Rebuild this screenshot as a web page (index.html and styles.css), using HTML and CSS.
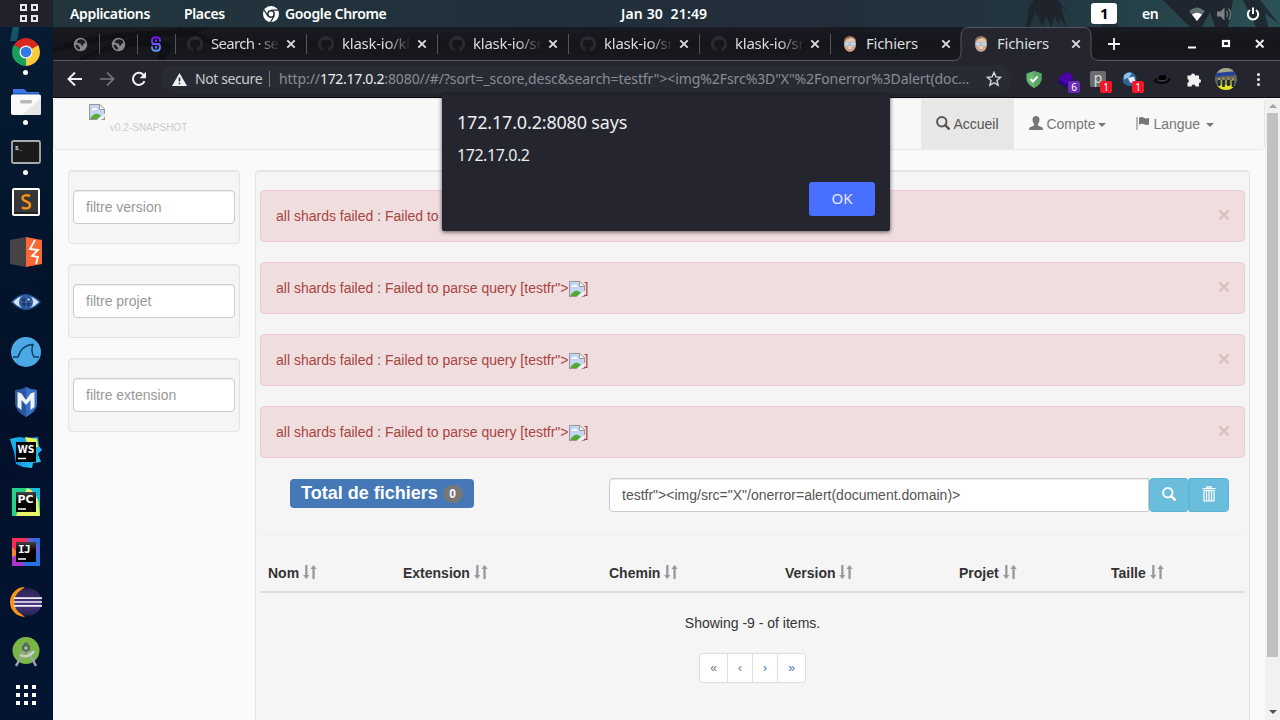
FILE: index.html
```html
<!DOCTYPE html>
<html lang="fr">
<head>
<meta charset="utf-8">
<title>Fichiers</title>
<link rel="stylesheet" href="styles.css">
</head>
<body>
<svg class="defs" aria-hidden="true">
  <defs>
    <symbol id="x" viewBox="0 0 10 10"><path d="M1.300 1.300l7.400 7.400M8.700 1.300L1.300 8.700" stroke="currentColor" stroke-width="1.900" fill="none"/></symbol>
    <symbol id="globe" viewBox="0 0 16 16"><circle cx="8" cy="8" r="7.200" fill="#88898b"/><path d="M8.500 2.300c-2.500.2-4 1.600-4.800 3.200l2.300 1.200 2.700.6-.4 1.500 2.200.4 1-2.300 1.900-.6C13.200 4 11 2.300 8.500 2.300zM2.600 8.400c.3 2.700 2.300 4.800 4.700 5.300l.3-2.300-1.700-1.500-.5-1.600z" fill="#1d1e24"/></symbol>
    <symbol id="github" viewBox="0 0 16 16"><path fill="#2a2b32" d="M8 0C3.600 0 0 3.600 0 8c0 3.500 2.300 6.500 5.500 7.600.4.100.5-.2.500-.4v-1.500c-2 .4-2.700-.9-2.900-1.500-.3-.7-.8-1-.9-1.200.7-.3 1.500.7 1.800 1.200.7 1 1.700.8 2.100.6.1-.5.300-.9.500-1.100-1.800-.2-3.600-.9-3.600-4 0-.9.300-1.600.8-2.100-.1-.2-.4-1 .1-2.100 0 0 .7-.2 2.200.8a7.500 7.500 0 0 1 4 0c1.500-1 2.200-.8 2.200-.8.400 1.100.2 1.900.1 2.100.5.600.8 1.300.8 2.100 0 3.100-1.900 3.700-3.700 3.900.3.300.6.800.6 1.500v2.100c0 .2.100.5.500.4A8 8 0 0 0 8 0z"/></symbol>
    <symbol id="face" viewBox="0 0 14 16"><path d="M1.500 4C2 1.500 4 .5 7 .5s5 1 5.500 3.500L12.800 9c-.3 4-2.300 6.500-5.800 6.500S1.500 13 1.200 9z" fill="#e6c3ad"/><path d="M1 7C.4 3 3 .3 7 .3S13.600 3 13 7l-.8-3L8.500 1.500l-5 1.700z" fill="#8d6a52"/><path d="M1.500 9.500c1.500 2 9.500 2 11 0-.5 4-2.400 6.100-5.500 6.100s-5-2.100-5.500-6.100z" fill="#cda088"/><path d="M1.500 6.800h4.700v2.200H2.200zM7.800 6.800h4.700l-.7 2.200H7.800z" fill="#eef6fc" stroke="#78b2dc" stroke-width=".8"/><path d="M5 12h4" stroke="#f4e8e1" stroke-width="1.200"/></symbol>
    <symbol id="broken" viewBox="0 0 16 16"><path d="M.5.500H11l4.500 4.500v10.500H.5z" fill="#c5d5f6"/><path d="M1 15c2-4 5-6 8-5l3 1.500L8 15.500z" fill="#56ab35"/><path d="M3 5.500c0-1.300 1.500-1.500 2-1 .7-1.400 2.600-.9 2.600.5.800 0 1.200.4 1.200 1H3z" fill="#fff"/><path d="M.5 16V.5H11l4.500 4.500V16M0 15.500h16" fill="none" stroke="#98989b"/><path d="M10.500 1v4.500H15" fill="#fff" stroke="#98989b"/><path d="M7 16.500l9-7v3l-4.500 4z" fill="#f7f0f1"/></symbol>
    <symbol id="search" viewBox="0 0 14 14"><circle cx="5.800" cy="5.800" r="4.700" fill="none" stroke="currentColor" stroke-width="2"/><path d="M9.200 9.200l3.500 3.500" stroke="currentColor" stroke-width="2.500" stroke-linecap="round"/></symbol>
    <symbol id="sort" viewBox="0 0 14 14"><path d="M2.200 0h2.300v10H6.400L3.300 14 0 10h2.200zM9.400 14h2.300V4h2L10.600 0 7.400 4h2z" fill="#999"/></symbol>
    <linearGradient id="blk" x2="0" y2="1"><stop stop-color="#444"/><stop offset=".45" stop-color="#000"/></linearGradient>
    <linearGradient id="ws" x2="1" y2=".7"><stop stop-color="#16c5ed"/><stop offset=".5" stop-color="#1a8ce8"/><stop offset="1" stop-color="#22cdf0"/></linearGradient>
    <linearGradient id="ecl" x2="0" y2="1"><stop stop-color="#2c2255"/><stop offset=".6" stop-color="#45377e"/><stop offset="1" stop-color="#282153"/></linearGradient>
    <linearGradient id="loop" gradientUnits="userSpaceOnUse" x1="0" y1="0" x2="0" y2="16"><stop stop-color="#7a08f5"/><stop offset="1" stop-color="#58aaf8"/></linearGradient>
  </defs>
</svg>

<div class="desktop">
  <nav class="dock">
    <div class="dock-top"><i></i><i></i><i></i><i></i></div>
    <div class="app"><svg viewBox="0 0 28 28"><path d="M14 14L1.880 7a14 14 0 0 1 24.240 0z" fill="#d92720"/><path d="M14 14v14A14 14 0 0 1 1.880 7z" fill="#16a05c"/><path d="M14 14l12.120-7A14 14 0 0 1 14 28z" fill="#fdcb3a"/><path d="M14 7h12.120L14 14z" fill="#d92720"/><path d="M8 18L1.880 7 14 14z" fill="#16a05c"/><path d="M14 28l6-11 2-3-8 2z" fill="#fdcb3a"/><circle cx="14" cy="14" r="6.600" fill="#f3f3f3"/><circle cx="14" cy="14" r="5.300" fill="#3478e8"/></svg><b></b></div>
    <div class="app"><svg class="wide" viewBox="0 0 30 28"><path d="M2 1h11l3 3h12v8H2z" fill="#3b78e7"/><rect x="2" y="5" width="26" height="2" fill="#2a5cc0"/><path d="M0 8q0-1.500 1.500-1.500h27Q30 6.500 30 8v17q0 2-2 2H2q-2 0-2-2z" fill="#fafafa"/><path d="M30 10v15q0 2-2 2H11z" fill="#e7e7e7"/><rect x="9" y="12" width="12" height="3.500" rx="1.500" fill="#b9b9b9"/></svg><b></b></div>
    <div class="app"><svg class="wide" viewBox="0 0 30 28"><rect x="1" y="3" width="28" height="22" rx="1.500" fill="#1a1b1d" stroke="#a9acab" stroke-width="1.800"/><text x="4" y="12" class="prompt">$_</text></svg><b></b></div>
    <div class="app"><svg viewBox="0 0 28 28"><rect x="1" y="1" width="26" height="26" rx="1" fill="#363839" stroke="#fff" stroke-width="2"/><path d="M2 24h24v2H2z" fill="#222"/><path d="M18 8.300C16 7 10.500 6.500 10.500 10.200c0 3.800 7.500 2.600 7.500 6.800 0 4.500-6 3.800-8 2.300" fill="none" stroke="#fb9018" stroke-width="2.400"/></svg></div>
    <div class="app"><svg class="burp" viewBox="0 0 32 32"><path d="M0 4L16 1v30L0 28z" fill="#444"/><path d="M16 1l16 3v24l-16 3z" fill="#fa6634"/><path d="M25 4l-5 9 8 1-6 6 6 1-2 7" fill="none" stroke="#fff" stroke-width="1.800"/></svg></div>
    <div class="app"><svg class="wide" viewBox="0 0 30 28"><path d="M0 14Q14-2 30 14 15 30 0 14z" fill="#235193"/><path d="M2 14Q14 1 28 14 15 27 2 14z" fill="#d0e3f2"/><circle cx="15" cy="14" r="7" fill="#26539c"/><circle cx="15" cy="14" r="4.200" fill="#183567"/><path d="M15 8v12M9 14h12" stroke="#6588ba" stroke-width=".7"/><circle cx="17.500" cy="11.500" r="1.300" fill="#b9d1ed"/></svg></div>
    <div class="app"><svg class="wide" viewBox="0 0 30 30"><circle cx="15" cy="15" r="15" fill="#4aa9e5"/><path d="M2 20h5C9 13 13 8 22 7.500c-2 5-1 9 1 12.500h5" fill="none" stroke="#133d69" stroke-width="1.500"/></svg></div>
    <div class="app"><svg viewBox="0 0 28 30"><path d="M3 3q6 0 11-3 5 3 11 3v13q0 8-11 14Q3 24 3 16z" fill="#2a55a0"/><path d="M14 0q5 3 11 3v13q0 8-11 14z" fill="#376fc4"/><path d="M5.500 5l4 1.500L14 13l4.500-6.500 4-1.500v15l-4 3V13L14 18l-4.500-5v10l-4-3z" fill="#eef2f8"/></svg></div>
    <div class="app"><svg class="burp" viewBox="0 0 32 32"><path d="M0 3l9-2 7 1 12-1 1 9 3 4-4 4 3 8-8 1-1 5-9-1-7-3-2-12z" fill="url(#ws)"/><path d="M15 1l12 2 1 8-9 2z" fill="#e8f552"/><rect x="6" y="6" width="20" height="20"/><text x="7.500" y="16.500" class="badge" textLength="17" lengthAdjust="spacingAndGlyphs">WS</text><path d="M8 22.500h8" stroke="#fff" stroke-width="1.500"/></svg></div>
    <div class="app"><svg viewBox="0 0 28 28"><rect width="28" height="28" fill="#23d18c"/><path d="M15 0l10 5 3 23H4z" fill="#eaf36a"/><path d="M18 0h10v14z" fill="#19bce0"/><rect x="4" y="4" width="20" height="20" fill="url(#blk)"/><text x="5.500" y="15" class="badge" textLength="16" lengthAdjust="spacingAndGlyphs">PC</text><path d="M6 21h8" stroke="#fff" stroke-width="1.500"/></svg></div>
    <div class="app"><svg viewBox="0 0 28 28"><rect width="28" height="28" fill="#2a70e5"/><path d="M0 0h17L10 14 0 11z" fill="#fa2b55"/><path d="M0 9l6 6-6 8z" fill="#f9832c"/><path d="M0 19l5-2 8 11H0z" fill="#a63ac7"/><path d="M14 0h6l8 11-4 8z" fill="#8153cf" opacity=".7"/><rect x="4" y="4" width="20" height="20" fill="url(#blk)"/><text x="6" y="15" class="badge mono">IJ</text><path d="M6 21h8" stroke="#fff" stroke-width="1.500"/></svg></div>
    <div class="app"><svg class="burp" viewBox="0 0 32 30"><path d="M15 0A15 15 0 0 0 15 30 18 18 0 0 1 15 0z" fill="#f6941d"/><circle cx="18" cy="15" r="13.700" fill="url(#ecl)"/><path d="M4 11.200h28M4 15h28M4 18.800h28" stroke="#f1effa" stroke-width="1.700"/></svg></div>
    <div class="app"><svg viewBox="0 0 28 30"><circle cx="14" cy="13.500" r="13.500" fill="#79b547"/><circle cx="14" cy="11" r="4.200" fill="#596669"/><rect x="12.500" y="5.500" width="3" height="4" fill="#596669"/><circle cx="14" cy="11" r="1.800" fill="#9ccb72"/><path d="M12 14L4 29M16 14L24 29" stroke="#9aa3a5" stroke-width="2.600"/><path d="M8 18q8 4 14-4" fill="none" stroke="#cad1cf" stroke-width="2.400"/></svg></div>
    <div class="app"><div class="grid9"><i></i><i></i><i></i><i></i><i></i><i></i><i></i><i></i><i></i></div></div>
  </nav>

  <div class="screen">
    <header class="panel">
      <svg class="scene" viewBox="0 0 1227 27" preserveAspectRatio="none"><path d="M973 27l3-20 5-7h24l10 13-7-7 5 21-6-9-1 9-4-11-4 11-5-12-3 12-8-16-5 16zM1110 0h70l-5 27h-13l-5-15-8 15h-12z" fill="#1d2029" opacity=".85"/><path d="M1190 0h17l20 25-15-12 3 14h-12z" fill="#1d2029" opacity=".8"/><path d="M1048 27l8-14 10 14z" fill="#1d2029" opacity=".5"/></svg>
      <span class="p-app">Applications</span>
      <span class="p-places">Places</span>
      <svg class="p-chrome" viewBox="0 0 16 16"><circle cx="8" cy="8" r="8" fill="#fff"/><circle cx="8" cy="8" r="3.200" fill="#fff" stroke="#24333c" stroke-width="1.500"/><path d="M8 4.200h7.200M4.800 10L1 4M11.200 9.700L7.600 16" stroke="#24333c" stroke-width="1.300"/></svg>
      <span class="p-title">Google Chrome</span>
      <span class="p-clock">Jan 30&nbsp; 21:49</span>
      <span class="p-ws">1</span>
      <span class="p-lang">en</span>
      <svg class="p-wifi" viewBox="0 0 16 14"><path d="M0 4Q8-3 16 4L8 14z" fill="#5f7075"/><path d="M3 7.500Q8 4 13 7.500L8 14z" fill="#fff"/></svg>
      <svg class="p-vol" viewBox="0 0 16 14"><path d="M0 4.500h3.500L7.500.500v13L3.500 9.500H0z" fill="#7b8287"/><path d="M9.500 4q2 3 0 6M11.500 1.500q4 5.500 0 11" fill="none" stroke="#667076" stroke-width="1.500"/></svg>
      <svg class="p-power" viewBox="0 0 14 14"><path d="M4 3a5.200 5.200 0 1 0 6 0M7 .5v6.500" fill="none" stroke="#fff" stroke-width="2"/></svg>
    </header>

    <div class="tabs">
      <svg class="dragon" viewBox="0 0 260 33"><path d="M0 22Q35 5 100 4l60-4-30 10Q70 5 0 26zM25 33Q55 14 100 8l20 10-8 15h-8l4-14Q65 17 30 33zM125 0l30 9-5 2 20 1-6 3 20 3-5 3 20 8-30-8-40-14z" fill="#0b0c0f" opacity=".55"/></svg>
      <div class="tab pin"><svg width="15" height="15"><use href="#globe"/></svg></div>
      <div class="tab pin"><svg width="15" height="15"><use href="#globe"/></svg></div>
      <div class="tab pin"><svg width="12" height="16" viewBox="0 0 12 16"><path d="M10 5.800V4.500Q10 1.200 6 1.200T2 4.500V5.500Q2 8 5 8H7Q10 8 10 10.500V11.500Q10 14.800 6 14.800T2 11.500V10.200M2 8H10M6 3.500V6M6 10v2.500" fill="none" stroke="url(#loop)" stroke-width="1.900"/></svg></div>
      <div class="tab"><svg class="fav"><use href="#github"/></svg><span class="fade first">Search · se</span><svg class="close"><use href="#x"/></svg></div>
      <div class="tab"><svg class="fav"><use href="#github"/></svg><span class="fade">klask-io/kl</span><svg class="close"><use href="#x"/></svg></div>
      <div class="tab"><svg class="fav"><use href="#github"/></svg><span class="fade">klask-io/sr</span><svg class="close"><use href="#x"/></svg></div>
      <div class="tab"><svg class="fav"><use href="#github"/></svg><span class="fade">klask-io/sr</span><svg class="close"><use href="#x"/></svg></div>
      <div class="tab"><svg class="fav"><use href="#github"/></svg><span class="fade">klask-io/sr</span><svg class="close"><use href="#x"/></svg></div>
      <div class="tab last"><svg class="fav"><use href="#face"/></svg><span>Fichiers</span><svg class="close"><use href="#x"/></svg></div>
      <div class="tab active"><svg class="shape" viewBox="0 0 146 34"><path d="M0 33.500Q8 33.500 8 25.500V8.500Q8 .5 16 .5H130Q138 .5 138 8.500V25.500Q138 33.500 146 33.500V34H0z" fill="#24252e"/><path d="M0 33.500Q8 33.500 8 25.500V8.500Q8 .5 16 .5H130Q138 .5 138 8.500V25.500Q138 33.500 146 33.500" fill="none" stroke="#54565c"/></svg><svg class="fav"><use href="#face"/></svg><span>Fichiers</span><svg class="close"><use href="#x"/></svg></div>
      <svg class="plus" viewBox="0 0 12 12"><path d="M6 0v12M0 6h12" stroke="#f2f2f2" stroke-width="1.900"/></svg>
      <svg class="win" viewBox="0 0 80 12"><path d="M1 9.500h8" stroke="#fff" stroke-width="2"/><rect x="36" y="3" width="6" height="5" fill="none" stroke="#fff" stroke-width="2.200"/><path d="M69 2l7.500 7.500M76.500 2L69 9.500" stroke="#eee" stroke-width="2"/></svg>
    </div>

    <div class="toolbar">
      <svg class="nav" viewBox="0 0 16 16"><path d="M15 8H2M8 1.500L1.500 8 8 14.500" fill="none" stroke="#f1f1f1" stroke-width="1.900"/></svg>
      <svg class="nav" viewBox="0 0 16 16"><path d="M1 8h13M8 1.500L14.500 8 8 14.500" fill="none" stroke="#777981" stroke-width="1.700"/></svg>
      <svg class="nav" viewBox="0 0 16 16"><path d="M13.500 10.200A6 6 0 1 1 12.300 3.700L14.500 6" fill="none" stroke="#f1f1f1" stroke-width="2"/><path d="M15 .8v6.400H8.700z" fill="#f1f1f1"/></svg>
      <div class="omnibox">
        <svg class="warn" viewBox="0 0 15 13"><path d="M7.500 0L15 13H0z" fill="#f1f1f1"/><path d="M7.500 4.500v4M7.500 9.700v1.600" stroke="#292b34" stroke-width="1.600"/></svg>
        <span class="ns">Not secure</span><i class="bar"></i>
        <span class="url">http://<em>172.17.0.2</em>:8080//#/?sort=_score,desc&amp;search=testfr"&gt;&lt;img%2Fsrc%3D"X"%2Fonerror%3Dalert(doc...</span>
        <svg class="star" viewBox="0 0 16 16"><path d="M8 1.500l1.900 4.400 4.700.4L11 9.500l1.100 4.700L8 11.700l-4.100 2.500L5 9.500 1.400 6.300l4.700-.4z" fill="none" stroke="#d6d7da" stroke-width="1.400"/></svg>
      </div>
      <div class="ext"><svg viewBox="0 0 16 17"><path d="M8 0l7.500 2.500v5Q15.500 13 8 17 .5 13 .5 7.500v-5z" fill="#67b772"/><path d="M8 0l7.500 2.500v5Q15.500 13 8 17z" fill="#5aa568"/><path d="M4.500 8l2.500 2.500 4.500-5" fill="none" stroke="#fff" stroke-width="2"/></svg></div>
      <div class="ext"><svg viewBox="0 0 16 16"><path d="M0 9l8-4 8 4v2l-8 5-8-5z" fill="#29057a"/><path d="M0 7l9-7 7 6-8 7z" fill="#4b04a8"/></svg><b class="purple">6</b></div>
      <div class="ext"><span class="p-box">p</span><b>1</b></div>
      <div class="ext"><svg viewBox="0 0 16 16"><circle cx="7.500" cy="7.500" r="7" fill="#2d6494"/><path d="M2 4q4-5 8-2L7 6l-5 2z" fill="#8fc2e7"/><path d="M6 6.500l6-1.500 2 7-6-1z" fill="#e6eef5"/></svg><b>1</b></div>
      <div class="ext"><svg viewBox="0 0 16 16"><path d="M4.500 9L5 4.500q1.500-1.500 3.500-.5 2-1 3.500.5L12 9z" fill="#000"/><path d="M.5 8.500Q1 11.500 8 11.500T15.500 6.500" fill="none" stroke="#000" stroke-width="1.600"/><path d="M.5 8.500Q2 7 4.500 7.500" fill="none" stroke="#000"/><path d="M4.500 8.500q4 1.500 7.500 0" stroke="#55565b" fill="none" stroke-width=".8"/></svg></div>
      <div class="ext"><svg viewBox="0 0 16 16"><path d="M1.500 4H5a2 2 0 1 1 4 0h4v3.500a2 2 0 1 1 0 4V15H9.500a2 2 0 0 0-4 0h-4v-3.700a2 2 0 0 0 0-3.800z" fill="#f1f1f1"/></svg></div>
      <div class="ext"><svg class="avatar" viewBox="0 0 22 22"><clipPath id="av"><circle cx="11" cy="11" r="11"/></clipPath><g clip-path="url(#av)"><rect width="22" height="22" fill="#5d6a58"/><path d="M0 5l22-3v5L0 9z" fill="#25429a"/><path d="M0 0h22v3L0 5z" fill="#a8a78c"/><path d="M0 17h22v5H0z" fill="#e5e427"/><path d="M4 18v-6M8.500 19v-7M13.500 18v-6M18 19v-6" stroke="#1d2840" stroke-width="2.600"/><path d="M6.500 17v-5M11 17v-5M16 17v-5" stroke="#a99d33" stroke-width="1.600"/><path d="M3 11h2M7.500 10.500h2M12.500 10.500h2M17 11h2" stroke="#b98a6c" stroke-width="2"/></g></svg></div>
      <div class="ext menu"><i></i><i></i><i></i></div>
    </div>

    <main class="page">
      <div class="content">
        <nav class="navbar">
          <div class="brand"><svg width="16" height="16"><use href="#broken"/></svg><small>v0.2-SNAPSHOT</small></div>
          <ul>
            <li class="on"><svg class="gl" width="14" height="14"><use href="#search"/></svg> Accueil</li>
            <li><svg class="gl" width="14" height="14" viewBox="0 0 14 14"><path d="M7 0q3.500 0 3.500 3.500Q10.500 6.500 9 8v1.500l4 1.700q1 .4 1 2.800H0q0-2.400 1-2.800l4-1.700V8Q3.500 6.500 3.500 3.500 3.500 0 7 0z" fill="currentColor"/></svg> Compte<i class="caret"></i></li>
            <li><svg class="gl" width="14" height="14" viewBox="0 0 14 14"><path d="M1 1v13" stroke="currentColor" stroke-width="1"/><path d="M3 1.800Q5.500.3 7.800 1.700T13 1.800V8.500Q10.500 9.500 8.200 8.200T3 8.700z" fill="currentColor"/></svg> Langue <i class="caret sp"></i></li>
          </ul>
        </nav>
        <div class="columns">
          <aside>
            <div class="well side"><input type="text" placeholder="filtre version"></div>
            <div class="well side"><input type="text" placeholder="filtre projet"></div>
            <div class="well side"><input type="text" placeholder="filtre extension"></div>
          </aside>
          <section class="well results">
            <div class="alert"><span>all shards failed : Failed to parse query [testfr"&gt;<svg class="bi"><use href="#broken"/></svg>]</span><svg class="dismiss"><use href="#x"/></svg></div>
            <div class="alert"><span>all shards failed : Failed to parse query [testfr"&gt;<svg class="bi"><use href="#broken"/></svg>]</span><svg class="dismiss"><use href="#x"/></svg></div>
            <div class="alert"><span>all shards failed : Failed to parse query [testfr"&gt;<svg class="bi"><use href="#broken"/></svg>]</span><svg class="dismiss"><use href="#x"/></svg></div>
            <div class="alert"><span>all shards failed : Failed to parse query [testfr"&gt;<svg class="bi"><use href="#broken"/></svg>]</span><svg class="dismiss"><use href="#x"/></svg></div>
            <div class="query">
              <div class="total">Total de fichiers <span>0</span></div>
              <div class="group">
                <input type="text" value="testfr&quot;&gt;&lt;img/src=&quot;X&quot;/onerror=alert(document.domain)&gt;">
                <button class="go"><svg width="14" height="14"><use href="#search"/></svg></button>
                <button class="del"><svg width="14" height="16" viewBox="0 0 14 16"><path d="M5 2V.8h4V2M.5 2.700h13" fill="none" stroke="#fff" stroke-width="1.300"/><path d="M2 4.500h10V15H2zM4.500 5v9.500M7 5v9.500M9.500 5v9.500" fill="none" stroke="#fff" stroke-width="1.200"/></svg></button>
              </div>
            </div>
            <hr>
            <div class="thead">
              <div>Nom <svg class="gl"><use href="#sort"/></svg></div><div>Extension <svg class="gl"><use href="#sort"/></svg></div><div>Chemin <svg class="gl"><use href="#sort"/></svg></div><div>Version <svg class="gl"><use href="#sort"/></svg></div><div>Projet <svg class="gl"><use href="#sort"/></svg></div><div>Taille <svg class="gl"><use href="#sort"/></svg></div>
            </div>
            <p class="showing">Showing -9 - of items.</p>
            <div class="pager"><span>«</span><span>‹</span><a>›</a><a>»</a></div>
          </section>
        </div>
      </div>
      <div class="scroll"><i class="up"></i><div class="thumb"></div><i class="down"></i></div>
    </main>
  </div>

  <div class="dialog">
    <h1>172.17.0.2:8080 says</h1>
    <p>172.17.0.2</p>
    <button>OK</button>
  </div>
</div>
</body>
</html>
```
FILE: styles.css
```css
* { box-sizing: border-box; }
body { margin: 0; width: 1280px; height: 720px; overflow: hidden; font: 14px/20px "Liberation Sans", Arial, sans-serif; color: #333; }
svg { display: block; flex: none; }
.defs { position: absolute; width: 0; height: 0; }
.desktop { display: flex; width: 1280px; height: 720px; position: relative; overflow: hidden; }

.dock { width: 53px; height: 720px; background: linear-gradient(100deg, transparent 12px, #15556a 13px, #15556a 18px, transparent 20px) 0 27px / 30px 14px no-repeat, linear-gradient(170deg, #071c34, #03162d 30%, #02102a 60%, #031532); }
.dock-top { height: 27px; background: #20212b; display: grid; grid-template-columns: 7px 7px; grid-auto-rows: 7px; gap: 4px; padding: 4px 0 0 20px; }
.dock-top i { border: 2px solid #e4e5e7; }
.app { height: 50px; display: flex; align-items: center; justify-content: center; position: relative; padding-right: 1px; }
.app svg { width: 28px; height: 30px; }
.app svg.wide { width: 30px; }
.app svg.burp { width: 32px; height: 32px; }
.app b { position: absolute; left: 23px; top: 43px; width: 5px; height: 5px; border-radius: 50%; background: #fff; }
.prompt { font: bold 6px "Liberation Mono", monospace; fill: #ddd; }
.badge { font: bold 11px "DejaVu Sans", sans-serif; fill: #fff; }
.badge.mono { font-family: "DejaVu Sans Mono", monospace; letter-spacing: -.6px; }
.grid9 { display: grid; grid-template-columns: repeat(3, 4px); grid-auto-rows: 4px; gap: 4px; margin-top: -14px; }
.grid9 i { background: #fff; }

.screen { width: 1227px; display: flex; flex-direction: column; font-family: "Noto Sans", sans-serif; }
.panel { height: 27px; position: relative; display: flex; align-items: center; background: linear-gradient(90deg, #22353d, #21303b 40%, #222e39 60%, #22353f 80%, #2b5155); color: #fff; font-weight: 600; font-size: 14px; letter-spacing: -.35px; padding-left: 17px; white-space: nowrap; }
.panel > * { position: relative; }
.panel .scene { position: absolute; left: 0; top: 0; width: 1227px; height: 27px; }
.p-app { width: 114px; }
.p-places { width: 79px; }
.p-chrome { width: 16px; height: 16px; }
.p-title { margin-left: 6px; width: 336px; }
.p-clock { width: 470px; letter-spacing: .15px; }
.p-ws { width: 26px; height: 21px; line-height: 21px; text-align: center; background: #fff; color: #000; border-radius: 3px; font-weight: 700; font-size: 15px; }
.p-lang { margin-left: 25px; width: 47px; }
.p-wifi { width: 16px; height: 14px; }
.p-vol { width: 16px; height: 14px; margin-left: 12px; }
.p-power { width: 14px; height: 14px; margin-left: 13px; }

.tabs { height: 34px; display: flex; background: linear-gradient(#1a1b22, #15161c 50%, #18191e); border-bottom: 1px solid #54565c; padding-left: 9px; position: relative; }
.dragon { position: absolute; left: 0; top: 0; width: 260px; height: 33px; }
.tab { width: 131px; height: 20px; margin-top: 7px; border-right: 1px solid #555659; padding-left: 11px; display: flex; align-items: center; position: relative; color: #dcdcde; font-size: 15px; white-space: nowrap; }
.tab.pin { width: 38px; padding: 0 1px 0 0; justify-content: center; }
.tab.last { border-color: transparent; }
.tab.active { border: 0; z-index: 1; }
.tab .fav { width: 16px; height: 16px; }
.tab span { width: 68px; margin-left: 8px; overflow: hidden; letter-spacing: -.25px; position: relative; top: -1px; }
.tab .first { letter-spacing: -.7px; }
.tab .fade { -webkit-mask-image: linear-gradient(90deg, #000 65%, transparent 102%); mask-image: linear-gradient(90deg, #000 65%, transparent 102%); }
.tab .close { width: 10px; height: 10px; margin-left: 7px; position: relative; }
.tab.active .fav { position: relative; }
.tab.active .close { margin-left: 6px; }
.tab .shape { position: absolute; left: -9px; top: -7px; width: 146px; height: 34px; }
.plus { width: 12px; height: 12px; margin: 11px 0 0 15px; }
.win { width: 80px; height: 12px; margin: 11px 0 0 67px; }

.toolbar { height: 37px; background: #24252e; border-bottom: 1px solid #0d0d11; display: flex; align-items: center; padding-left: 14px; }
.nav { width: 16px; height: 16px; margin-right: 16px; }
.omnibox { width: 851px; height: 28px; margin-left: -2px; border-radius: 14px; background: #292b34; display: flex; align-items: center; padding-left: 11px; font-size: 14px; margin-right: 6px; white-space: nowrap; }
.warn { width: 15px; height: 13px; }
.ns { width: 68px; margin-left: 8px; color: #c9cacd; letter-spacing: -.4px; }
.bar { width: 1px; height: 16px; background: #74767c; margin: 0 9px 0 6px; }
.url { width: 695px; color: #8a8c93; letter-spacing: -.09px; }
.url em { font-style: normal; color: #eee; letter-spacing: -.3px; }
.star { width: 16px; height: 16px; margin-left: 12px; }
.ext { width: 32px; height: 32px; display: flex; align-items: center; justify-content: center; position: relative; }
.ext svg { width: 16px; height: 17px; }
.ext svg.avatar { width: 22px; height: 22px; }
.ext b { position: absolute; left: 18px; top: 18px; width: 12px; height: 12px; border-radius: 2px; background: #f31626; color: #fff; font: 10px/12px "Noto Sans", sans-serif; text-align: center; }
.ext b.purple { background: #6a2cb5; }
.p-box { width: 16px; height: 16px; border-radius: 2px; background: #6c6c6e; color: #ddd; font: 14px/14px "Noto Sans", sans-serif; text-align: center; }
.menu { flex-direction: column; gap: 2px; }
.menu i { width: 3px; height: 3px; border-radius: 50%; background: #f1f1f1; }

.page { height: 622px; display: flex; background: #fafafa; font-family: "Liberation Sans", Arial, sans-serif; }
.content { width: 1212px; overflow: hidden; }
.navbar { height: 52px; background: #f8f8f8; border: 1px solid #e7e7e7; border-radius: 4px; display: flex; justify-content: space-between; padding: 0 35px; color: #777; }
.brand { display: flex; padding-top: 5px; }
.brand small { font-size: 10px; color: #ccc; margin: 14px 0 0 5px; }
.navbar ul { list-style: none; display: flex; margin: -1px 0 0; padding: 0; }
.navbar li { height: 51px; padding: 16px 15px 0; white-space: pre; }
.navbar .on { background: #e7e7e7; color: #555; }
.gl { display: inline-block; width: 14px; height: 14px; vertical-align: -1px; }
.caret { display: inline-block; border: 4px solid transparent; border-top-color: currentColor; border-bottom: 0; vertical-align: 2px; margin-left: 2px; }
.navbar .sp { margin-left: 2px; }
.columns { display: flex; gap: 15px; padding: 20px 15px 0; }
aside { width: 172px; }
.well { background: #f5f5f5; border: 1px solid #e3e3e3; border-radius: 4px; box-shadow: inset 0 1px 1px rgba(0,0,0,.05); padding: 19px 4px; }
.side { height: 74px; margin-bottom: 20px; }
input { width: 100%; height: 34px; border: 1px solid #ccc; border-radius: 4px; padding: 6px 12px; font: 14px/20px "Liberation Sans", Arial, sans-serif; color: #555; background: #fff; box-shadow: inset 0 1px 1px rgba(0,0,0,.075); display: block; }
input::placeholder { color: #999; opacity: 1; }
.results { width: 995px; height: 620px; }
.alert { height: 52px; border: 1px solid #ebccd1; border-radius: 4px; background: #f0dede; color: #a94442; padding: 0 14px 0 15px; margin-bottom: 20px; display: flex; justify-content: space-between; align-items: center; }
.bi { display: inline-block; width: 16px; height: 16px; vertical-align: -4px; }
.dismiss { width: 12px; height: 12px; color: #dcbcbc; margin-top: -2px; }
.query { display: flex; justify-content: space-between; height: 34px; padding: 0 16px 0 30px; }
.total { width: 184px; height: 29px; margin-top: 1px; background: #4478b7; color: #fff; border-radius: 4px; font: bold 18px/29px "Liberation Sans", Arial, sans-serif; padding-left: 11px; white-space: nowrap; display: flex; }
.total span { width: 20px; height: 18px; margin: 6px 0 0 5px; border-radius: 10px; background: #777; font-size: 12px; line-height: 18px; text-align: center; }
.group { display: flex; width: 620px; }
.group input { width: 540px; border-radius: 4px 0 0 4px; }
.group button { width: 40px; height: 34px; border: 1px solid #5ab5d8; background: #6bbddc; color: #fff; padding: 0 0 2px; display: flex; align-items: center; justify-content: center; }
.group .go { border-radius: 4px; }
.group .del { border-radius: 0 4px 4px 0; }
hr { border: 0; border-top: 1px solid #eee; margin: 22px 0 20px; }
.thead { display: grid; grid-template-columns: 135px 206px 176px 174px 152px 142px; height: 38px; border-bottom: 2px solid #ddd; font-weight: bold; padding-top: 8px; }
.thead div { padding-left: 8px; white-space: nowrap; }
.showing { text-align: center; margin: 20px 0; }
.pager { display: flex; width: 107px; height: 30px; margin: 0 auto; border: 1px solid #ddd; border-radius: 3px; background: #fff; font-size: 12px; line-height: 28px; text-align: center; color: #777; }
.pager > * { width: 25px; border-right: 1px solid #ddd; }
.pager > :first-child { width: 28px; }
.pager > :last-child { width: 27px; border: 0; }
.pager a { color: #4078bd; }
.scroll { width: 15px; height: 622px; background: #f1f1f1; display: flex; flex-direction: column; align-items: center; }
.up { border: 4px solid transparent; border-bottom-color: #a3a3a3; border-top: 0; margin-top: 6px; }
.thumb { width: 11px; height: 544px; background: #c1c1c1; margin: 5px 0 0; }
.down { border: 4px solid transparent; border-top-color: #505050; border-bottom: 0; margin-top: 53px; }

.dialog { position: absolute; left: 442px; top: 94px; width: 448px; height: 137px; z-index: 2; background: #24252e; border-radius: 2px; box-shadow: 0 1px 4px rgba(0,0,0,.65); padding: 16px 15px 0; font-family: "Noto Sans", sans-serif; color: #ededee; }
.dialog h1 { font-size: 18px; line-height: 24px; font-weight: 400; margin: 0; letter-spacing: -.18px; }
.dialog p { font-size: 16px; line-height: 20px; margin: 11px 0 17px; letter-spacing: -.45px; }
.dialog button { display: block; margin-left: auto; width: 66px; height: 34px; border: 0; border-radius: 3px; background: #486fff; color: #e6eaff; font: 15px/33px "Noto Sans", sans-serif; padding: 0 0 1px; }
```
